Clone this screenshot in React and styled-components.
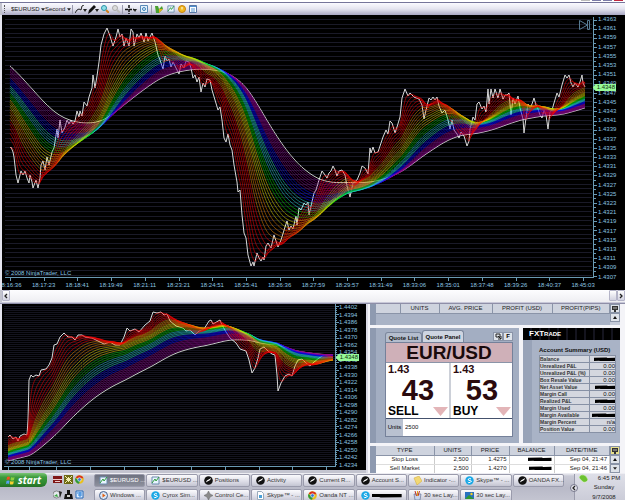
import React from 'react';
import styled, { createGlobalStyle } from 'styled-components';

const GlobalStyle = createGlobalStyle`
    * { box-sizing: border-box; }
    body {
        margin: 0;
        background: #c3c4cf;
        font-family: "Liberation Sans", Arial, sans-serif;
        font-size: 6px;
    }
    button, select, input { font: inherit; margin: 0; padding: 0; border: none; }
    h1, h2, p { margin: 0; }
`;

/* ---------- chart data ---------- */

const mainPrice = [
    [10,148],[11,147],[13,152],[14,157],[16,175],[18,183],[21,171],[23,175],[25,171],[27,178],[29,183],[30,175],
    [32,182],[33,188],[36,180],[38,188],[40,178],[41,165],[43,161],[45,170],[47,157],[49,165],[52,152],[54,148],
    [57,129],[58,138],[60,120],[62,133],[65,127],[67,120],[69,124],[71,120],[73,124],[75,121],[77,111],[79,117],
    [80,111],[82,116],[84,102],[87,106],[89,97],[92,88],[93,75],[95,88],[97,76],[99,62],[101,45],[104,34],
    [107,28],[110,36],[113,46],[116,37],[118,29],[120,37],[122,34],[124,46],[126,38],[129,46],[131,29],[133,32],
    [134,46],[137,34],[139,38],[141,33],[144,42],[146,33],[148,41],[152,33],[155,42],[158,55],[160,60],[163,69],
    [165,56],[167,61],[169,59],[171,67],[173,62],[176,68],[179,74],[181,64],[184,68],[186,61],[189,62],[191,68],
    [193,78],[195,75],[197,82],[199,77],[201,92],[203,83],[205,87],[207,79],[210,80],[212,90],[215,100],[218,110],
    [220,107],[222,120],[224,138],[226,142],[228,134],[230,145],[232,150],[234,165],[237,182],[238,192],[240,190],
    [242,215],[244,233],[246,238],[248,255],[251,266],[253,262],[254,266],[257,253],[259,258],[261,261],[263,257],
    [264,260],[266,246],[268,243],[271,248],[274,235],[278,247],[281,240],[285,227],[287,221],[289,230],[291,226],
    [293,229],[296,216],[297,225],[299,208],[301,210],[304,203],[306,205],[308,202],[309,215],[311,206],[314,193],
    [316,190],[319,180],[322,171],[325,175],[327,178],[329,173],[331,171],[333,166],[335,170],[337,176],[339,171],
    [342,170],[345,175],[347,186],[350,197],[353,183],[357,180],[360,173],[362,166],[365,168],[368,174],[370,148],
    [371,153],[373,147],[375,153],[378,152],[381,143],[383,137],[386,130],[388,134],[390,121],[392,123],[395,133],
    [397,127],[400,117],[402,98],[405,89],[408,96],[410,93],[412,95],[414,97],[416,98],[419,99],[422,105],[424,119],
    [426,110],[429,98],[431,100],[433,97],[435,100],[437,97],[439,106],[442,113],[445,110],[448,120],[450,129],
    [452,120],[454,130],[457,134],[459,138],[461,132],[464,136],[467,146],[469,141],[470,129],[473,117],[475,120],
    [477,104],[479,102],[482,109],[484,106],[486,112],[488,89],[489,104],[491,89],[493,98],[495,89],[498,98],
    [500,89],[503,99],[505,95],[507,95],[509,93],[511,115],[513,98],[515,104],[518,96],[520,108],[523,119],
    [524,133],[526,118],[528,104],[530,108],[532,104],[534,98],[536,105],[538,109],[540,115],[542,118],[544,110],
    [546,115],[548,129],[550,112],[552,110],[554,103],[557,93],[559,97],[562,85],[565,75],[567,78],[569,75],
    [571,83],[573,87],[575,83],[578,87],[580,82],[582,75],[583,83],[585,87],
];

const lowerPrice = [
    [8,437],[10,435],[13,439],[16,437],[18,441],[20,436],[24,434],[27,435],[28,420],[29,380],[31,375],[33,377],
    [36,375],[39,376],[41,370],[46,369],[49,365],[52,358],[54,345],[57,344],[60,337],[64,333],[68,337],[72,337],
    [75,340],[78,335],[82,335],[85,337],[92,338],[98,341],[104,344],[110,342],[115,345],[120,345],[124,337],
    [127,328],[130,331],[135,329],[139,332],[145,325],[150,321],[153,312],[157,313],[161,312],[164,315],[167,314],
    [170,321],[176,326],[183,328],[186,331],[190,330],[195,335],[199,331],[204,329],[209,321],[211,320],[213,324],
    [220,320],[222,325],[226,332],[230,338],[236,343],[240,349],[246,351],[249,360],[252,373],[255,368],[258,358],
    [260,349],[264,347],[268,351],[272,354],[275,355],[277,375],[278,391],[281,383],[285,376],[289,374],[292,376],
    [295,366],[298,360],[302,359],[306,363],[310,366],[314,362],[319,358],[324,355],[329,356],[333,357],
];

// fast to slow
const ribbonColors = [
    ...Array(6).fill('#f80000'),
    ...Array(4).fill('#e88400'),
    ...Array(4).fill('#e0d800'),
    ...Array(3).fill('#00d800'),
    ...Array(4).fill('#20d0d0'),
    ...Array(4).fill('#0808ff'),
    ...Array(7).fill('#8c008c'),
    '#e8e8e8',
];

const priceAt = (points, x) => {
    const i = points.findIndex((p) => p[0] >= x);
    if (i <= 0) return points[0][1];
    const [x0, y0] = points[i - 1];
    const [x1, y1] = points[i];
    return y0 + ((y1 - y0) * (x - x0)) / (x1 - x0);
};

// exponential average, smoothed a second time with a shorter period
const average = (points, start, period, lag) => {
    const [firstX, firstY] = points[0];
    const last = points[points.length - 1][0];
    let ema = start + (firstY - start) * lag * 0.7;
    let line = start;
    const out = [];
    for (let x = firstX; x <= last; x++) {
        ema += (priceAt(points, x) - ema) / period;
        line += (ema - line) / (1 + period * lag);
        out.push(`${x},${line.toFixed(1)}`);
    }
    return out.join(' ');
};

const Ribbon = ({ points, slowStart, slowest, lag }) => {
    const n = ribbonColors.length - 1;
    const first = points[0][1];
    return (
        <g fill="none">
            <polyline points={points.join(' ')} stroke="#d8d8d8" />
            {ribbonColors.map((color, i) => {
                const t = i / n;
                const start = first + (slowStart - first) * Math.pow(t, 0.58);
                return (
                    <polyline
                        key={i}
                        points={average(points, start, 3 + (slowest - 3) * t, lag)}
                        stroke={color}
                        strokeOpacity={i === n ? 0.85 : 0.52}
                    />
                );
            }).reverse()}
        </g>
    );
};

const range = (n) => Array.from({ length: n }, (_, i) => i);

const mainPrices = range(29).map((i) => (1.4363 - i * 0.0002).toFixed(4));
const lowerPrices = range(22).map((i) => (1.4402 - i * 0.0008).toFixed(4));
const times = [
    '18:16:36', '18:17:23', '18:18:41', '18:19:49', '18:21:11', '18:23:21', '18:24:51', '18:25:41', '18:26:36',
    '18:27:59', '18:29:57', '18:31:49', '18:33:06', '18:35:01', '18:37:48', '18:39:26', '18:40:37', '18:45:03',
];

/* ---------- chart window ---------- */

const Page = styled.div`
    display: flex;
    flex-direction: column;
    min-height: 100vh;
    overflow: hidden;
`;
const TitleEdge = styled.div`
    height: 3px;
    background: #fff;
    border-bottom: 1px solid #75759a;
    display: flex;
    justify-content: flex-end;
    gap: 2px;
    padding-right: 2px;
`;
const TitleButton = styled.button`
    width: 9px;
    height: 1px;
    background: ${(p) => p.$color};
`;
const Toolbar = styled.div`
    height: 12px;
    margin-left: 2px;
    padding-left: 2px;
    display: flex;
    align-items: center;
    background: linear-gradient(#fafaff, #e4e4ef 50%, #a9a8c4);
`;
const Grip = styled.span`
    width: 1px;
    height: 8px;
    border-left: 1px dotted #555;
    margin-right: 6px;
`;
const Divider = styled.span`
    width: 1px;
    height: 9px;
    background: #9a9aae;
    margin: 0 1px;
`;
const Picker = styled.select`
    appearance: none;
    width: ${(p) => p.$width}px;
    height: 10px;
    color: #222;
    background: transparent;
`;
const ToolButton = styled.button`
    display: flex;
    align-items: center;
    justify-content: center;
    width: ${(p) => p.$width || 12}px;
    height: 10px;
    background: transparent;
`;
const ChartFrame = styled.div`
    display: flex;
    background: #000;
    border-left: 2px solid #e4e4ee;
    height: ${(p) => p.$height}px;
    position: relative;
    overflow: hidden;
    flex: ${(p) => p.$grow || 'none'};
    min-width: 0;
`;
const PlotColumn = styled.div`
    flex: 1;
    min-width: 0;
    overflow: hidden;
`;
const Plot = styled.svg`
    display: block;
    width: 100%;
    height: ${(p) => p.$height}px;
`;
const PriceScale = styled.div`
    width: 27px;
    height: ${(p) => p.$height}px;
    display: flex;
    flex-direction: column;
    justify-content: space-between;
    color: #8cc4e0;
    line-height: ${(p) => p.$line}px;
`;
const TimeScale = styled.div`
    display: grid;
    grid-template-columns: repeat(18, 1fr);
    margin: 0 -2px 0 -9px;
    color: #8cc4e0;
    text-align: center;
    line-height: 8px;
`;
const PriceTag = styled.span`
    position: absolute;
    right: ${(p) => p.$right}px;
    top: ${(p) => p.$top}px;
    padding: 0 1px 0 4px;
    line-height: 7px;
    color: #103010;
    background: #98fb98;
    clip-path: polygon(0 50%, 3px 0, 100% 0, 100% 100%, 3px 100%);
`;
const Copyright = styled.p`
    position: absolute;
    left: 3px;
    bottom: ${(p) => p.$bottom}px;
    line-height: 8px;
    color: #8cc4e0;
`;
const ScrollTrack = styled.div`
    display: flex;
    justify-content: space-between;
    height: 12px;
    margin-left: 2px;
    background: linear-gradient(#fdfdff, #eeeef2);
`;
const ScrollEnd = styled.div`
    display: flex;
`;
const ScrollButton = styled.button`
    width: 8px;
    height: 11px;
    border: 1px solid #b4b4c8;
    border-radius: 1px;
    background: linear-gradient(#fff, #d2d2e0);
    display: flex;
    align-items: center;
    justify-content: center;
`;
const WindowEdge = styled.div`
    height: 2px;
    background: #8f8fa8;
    border-top: 1px solid #c8c8d8;
`;

const Caret = () => (
    <svg width="4" height="3" viewBox="0 0 5 3"><path d="M0 0h5L2.5 3z" fill="#222" /></svg>
);

const Arrow = ({ d }) => (
    <svg width="6" height="6" viewBox="0 0 6 6"><path d={d} fill="none" stroke="#222" strokeWidth="1.3" /></svg>
);

const MainChart = () => (
    <ChartFrame $height={275}>
        <PlotColumn>
            <Plot $height={266} viewBox="2 15 596 266" preserveAspectRatio="none">
                {range(57).map((i) => (
                    <rect key={i} x="5" y={Math.round(19 + i * 4.57)} width="587" height="1" fill="#1a1a28" />
                ))}
                <Ribbon points={mainPrice} slowStart={65} slowest={64} lag={0.28} />
                <g fill="#6a9ab4">
                    <rect x="593" y="17" width="1" height="261" />
                    <rect x="5" y="277" width="589" height="1" />
                    {range(57).map((i) => (
                        <rect key={i} x="594" y={Math.round(20 + i * 4.57)} width={i % 2 ? 2 : 3} height="1" />
                    ))}
                    {range(18).map((i) => (
                        <rect key={i} x={Math.round(10 + i * 33.7)} y="278" width="1" height="3" />
                    ))}
                </g>
                <g fill="none" stroke="#587c94">
                    <path d="M579.500 20.500v9l8-4.500zM587.500 20.500h2v9h-2z" />
                </g>
            </Plot>
            <TimeScale>
                {times.map((t) => <span key={t}>{t}</span>)}
            </TimeScale>
        </PlotColumn>
        <PriceScale $height={266} $line={8}>
            {mainPrices.map((p) => <span key={p}>{p}</span>)}
        </PriceScale>
        <PriceTag $right={9} $top={69}>1.4348</PriceTag>
        <Copyright $bottom={13}>© 2008 NinjaTrader, LLC</Copyright>
    </ChartFrame>
);

const LowerChart = () => (
    <ChartFrame $height={166} $grow={1}>
        <PlotColumn>
            <Plot $height={166} viewBox="2 304 337 166" preserveAspectRatio="none">
                {range(80).map((i) => (
                    <rect key={i} x="4" y={306 + i * 2} width="331" height="1" fill="#14141f" />
                ))}
                <Ribbon points={lowerPrice} slowStart={461} slowest={80} lag={0.08} />
                <g fill="#6a9ab4">
                    <rect x="335" y="304" width="1" height="163" />
                    <rect x="4" y="466" width="332" height="1" />
                    {range(80).map((i) => (
                        <rect key={i} x="336" y={306 + i * 2} width={i % 4 ? 1 : 3} height="1" />
                    ))}
                    {[8, 29, 56, 90, 124, 157, 191, 225, 259, 292, 326].map((x) => (
                        <rect key={x} x={x} y="467" width="1" height="3" />
                    ))}
                </g>
            </Plot>
        </PlotColumn>
        <PriceScale $height={165} $line={7}>
            {lowerPrices.map((p) => <span key={p}>{p}</span>)}
        </PriceScale>
        <PriceTag $right={7} $top={50}>1.4348</PriceTag>
        <Copyright $bottom={4}>© 2008 NinjaTrader, LLC</Copyright>
    </ChartFrame>
);

/* ---------- trading side ---------- */

const Bottom = styled.div`
    display: flex;
`;
const Side = styled.div`
    width: 259px;
    display: flex;
    flex-direction: column;
    gap: 3px;
    padding: 0 5px 0 2px;
    border-left: 2px solid #dcdce6;
    background: #f4f4f8;
`;
const Strip = styled.div`
    display: flex;
    height: ${(p) => p.$height}px;
    padding-left: 6px;
    background: #8e9ab0;
    overflow: hidden;
`;
const List = styled.table`
    flex: 1;
    table-layout: fixed;
    border-collapse: collapse;
    background: #a9b3c6;
    color: #222;
    line-height: 7px;
    th {
        height: 9px;
        padding: 0;
        font-weight: normal;
        background: #ced3de;
        border-right: 1px solid #8a94a8;
        border-bottom: 1px solid #8a94a8;
    }
    td {
        height: 9px;
        padding: 0 2px;
        text-align: right;
        background: #fff;
        border-right: 1px solid #ccc;
        border-bottom: 1px solid #ddd;
    }
    td:first-child { text-align: center; }
`;
const ListTools = styled.div`
    width: 10px;
    display: flex;
    flex-direction: column;
    background: #c4cad8;
`;
const SmallButton = styled.button`
    width: 10px;
    height: 9px;
    flex: none;
    display: flex;
    align-items: center;
    justify-content: center;
    border: 1px solid #8a94a8;
    background: ${(p) => p.$color || '#dfe3ea'};
`;
const Middle = styled.div`
    display: flex;
    gap: 4px;
    height: 115px;
`;
const QuoteArea = styled.div`
    flex: 1;
    padding: 2px 6px 4px 9px;
    background: #a3aec2;
    border-left: 6px solid #8e9ab0;
`;
const TabRow = styled.div`
    display: flex;
    align-items: flex-end;
    height: 12px;
`;
const Tab = styled.button`
    width: ${(p) => (p.$active ? 42 : 37)}px;
    height: ${(p) => (p.$active ? 12 : 10)}px;
    border: 1px solid #7b879c;
    border-bottom: none;
    border-radius: 3px 3px 0 0;
    font-weight: bold;
    white-space: nowrap;
    color: #111;
    background: ${(p) => (p.$active ? '#ced5e1' : '#b4bdcd')};
`;
const TabTools = styled.div`
    display: flex;
    margin-left: auto;
    align-self: center;
    font-weight: bold;
`;
const Ticket = styled.div`
    border: 1px solid #75819a;
    background: #fff;
`;
const Pair = styled.h1`
    font-size: 19px;
    line-height: 19px;
    font-weight: bold;
    text-align: center;
    color: #1a0a0c;
    background: #cfb0b8;
    border-bottom: 1px solid #8a94a8;
`;
const Sides = styled.div`
    display: grid;
    grid-template-columns: 1fr 1fr;
`;
const Deal = styled.button`
    display: flex;
    flex-direction: column;
    height: 55px;
    padding: 0 1px 0 2px;
    background: #fff;
    color: #2a0a0e;
    & + & { border-left: 2px solid #ccd0d8; }
`;
const Handle = styled.span`
    align-self: flex-start;
    font-size: 11px;
    line-height: 13px;
    font-weight: bold;
`;
const Pips = styled.span`
    align-self: center;
    font-size: 29px;
    line-height: 29px;
    font-weight: bold;
`;
const Action = styled.span`
    align-self: stretch;
    display: flex;
    align-items: center;
    justify-content: space-between;
    font-size: 12px;
    line-height: 13px;
    font-weight: bold;
    color: #000;
`;
const UnitsRow = styled.label`
    display: flex;
    height: 18px;
    border-top: 1px solid #44516c;
    line-height: 17px;
    background: #b9c1d0;
    span { width: 17px; text-align: center; }
    input { flex: 1; min-width: 0; padding-left: 2px; background: #fff; color: #111; }
`;
const Account = styled.div`
    width: 97px;
    background: #a9b3c6;
`;
const Brand = styled.div`
    height: 12px;
    padding-left: 6px;
    font-size: 8px;
    line-height: 12px;
    font-weight: bold;
    font-variant: small-caps;
    color: #fff;
    background: #000 repeating-linear-gradient(90deg, transparent 0 7px, #14141e 7px 9px);
`;
const AccountBody = styled.div`
    height: 103px;
    padding: 5px 0 0 7px;
    border-left: 9px solid #98a3b8;
`;
const AccountTitle = styled.h2`
    font-size: 6px;
    line-height: 10px;
    white-space: nowrap;
    color: #111;
`;
const AccountTable = styled.table`
    width: 77px;
    table-layout: fixed;
    border-collapse: collapse;
    font-size: 5px;
    line-height: 6px;
    color: #111;
    th, td {
        height: 7px;
        padding: 0;
        border: 1px solid #8791a5;
        background: #d4d7df;
        white-space: nowrap;
    }
    th { width: 50px; text-align: left; font-weight: bold; color: #333; }
    td { font-size: 6px; text-align: right; }
`;
const Mark = styled.span`
    display: inline-block;
    vertical-align: middle;
    width: ${(p) => p.$width}px;
    height: 4px;
    background: #000;
    clip-path: polygon(0 10%, 60% 0, 64% 15%, 100% 10%, 100% 95%, 30% 100%, 25% 85%, 0 90%);
`;

const accountRows = [
    ['Balance', 21], ['Unrealized P&L', '0.00'], ['Unrealized P&L (%)', '0.00'], ['Box Resale Value', '0.00'],
    ['Net Asset Value', 20], ['Margin Call', '0.00'], ['Realized P&L', 20], ['Margin Used', '0.00'],
    ['Margin Available', 23], ['Margin Percent', 'n/a'], ['Position Value', '0.00'],
];

const DownMark = () => (
    <svg width="15" height="9" viewBox="0 0 15 9"><path d="M0 0h15L7.500 9z" fill="#e3b5b8" /></svg>
);
const Monitor = () => (
    <svg width="6" height="6" viewBox="0 0 6 6"><path d="M0 0h6v4H4v2H2V4H0z" fill="#333" /><path d="M1 1h4v2H1z" fill="#777" /></svg>
);
const UpArrow = () => (
    <svg width="4" height="3" viewBox="0 0 4 3"><path d="M0 3h4L2 0z" fill="#111" /></svg>
);
const Quote = ({ name, pips }) => (
    <Deal>
        <Handle>1.43</Handle>
        <Pips>{pips}</Pips>
        <Action>{name}<DownMark /></Action>
    </Deal>
);

const Trading = () => (
    <Side>
        <Strip $height={21}>
            <List>
                <thead>
                    <tr>
                        <th width="24" /><th width="39">UNITS</th><th width="53">AVG. PRICE</th>
                        <th width="60">PROFIT (USD)</th><th>PROFIT(PIPS)</th>
                    </tr>
                </thead>
                <tbody><tr /></tbody>
            </List>
            <ListTools>
                <SmallButton aria-label="Columns"><Monitor /></SmallButton>
                <SmallButton aria-label="Scroll up"><UpArrow /></SmallButton>
            </ListTools>
        </Strip>
        <Middle>
            <QuoteArea>
                <TabRow>
                    <Tab>Quote List</Tab>
                    <Tab $active>Quote Panel</Tab>
                    <TabTools>
                        <SmallButton aria-label="Detach">
                            <svg width="7" height="7" viewBox="0 0 7 7">
                                <path d="M1 1h4v3H1zM3 3l3 3M6 3v3H3" fill="none" stroke="#222" />
                            </svg>
                        </SmallButton>
                        <SmallButton>F</SmallButton>
                    </TabTools>
                </TabRow>
                <Ticket>
                    <Pair>EUR/USD</Pair>
                    <Sides>
                        <Quote name="SELL" pips="43" />
                        <Quote name="BUY" pips="53" />
                    </Sides>
                    <UnitsRow><span>Units</span><input type="text" defaultValue="2500" /></UnitsRow>
                </Ticket>
            </QuoteArea>
            <Account>
                <Brand>FXTrade</Brand>
                <AccountBody>
                    <AccountTitle>Account Summary (USD)</AccountTitle>
                    <AccountTable>
                        <tbody>
                            {accountRows.map(([name, value]) => (
                                <tr key={name}>
                                    <th scope="row">{name}</th>
                                    <td>{typeof value === 'number' ? <Mark $width={value} /> : value}</td>
                                </tr>
                            ))}
                        </tbody>
                    </AccountTable>
                </AccountBody>
            </Account>
        </Middle>
        <Strip $height={27}>
            <List>
                <thead>
                    <tr>
                        <th width="58">TYPE</th><th width="37">UNITS</th><th width="38">PRICE</th>
                        <th width="45">BALANCE</th><th>DATE/TIME</th>
                    </tr>
                </thead>
                <tbody>
                    <tr><td>Stop Loss</td><td>2,500</td><td>1.4275</td><td><Mark $width={24} /></td><td>Sep 04, 21:47</td></tr>
                    <tr><td>Sell Market</td><td>2,500</td><td>1.4270</td><td><Mark $width={23} /></td><td>Sep 04, 21:46</td></tr>
                </tbody>
            </List>
            <ListTools>
                <SmallButton $color="#e8e08a" aria-label="Columns"><Monitor /></SmallButton>
                <SmallButton aria-label="Scroll up"><UpArrow /></SmallButton>
                <SmallButton aria-label="Scroll down"><Caret /></SmallButton>
            </ListTools>
        </Strip>
    </Side>
);

/* ---------- task bar ---------- */

const Taskbar = styled.div`
    display: flex;
    flex: 1;
    height: 30px;
    background: linear-gradient(#f4f4f8, #c9cad6 10%, #b9bac8 50%, #c6c7d3);
`;
const StartButton = styled.button`
    display: flex;
    align-items: center;
    justify-content: center;
    gap: 3px;
    width: 47px;
    height: 14px;
    border-radius: 0 4px 6px 0;
    font-family: "Open Sans", sans-serif;
    font-size: 10px;
    font-style: italic;
    font-weight: bold;
    line-height: 10px;
    color: #fff;
    background: linear-gradient(#7cc576, #3c9a3c 30%, #2f8a30 70%, #256f27);
`;
const QuickLaunch = styled.div`
    display: grid;
    grid-template-columns: repeat(3, 9px);
    grid-template-rows: 13px 13px;
    gap: 2px;
    align-items: center;
    padding-left: 6px;
    width: 47px;
`;
const Tasks = styled.div`
    flex: 1;
    min-width: 0;
    display: grid;
    grid-template-columns: repeat(9, 1fr);
    grid-template-rows: 13px 13px;
    gap: 2px 1px;
    padding: 1px 0;
`;
const Task = styled.button`
    display: flex;
    align-items: center;
    gap: 2px;
    min-width: 0;
    padding: 0 0 0 4px;
    border: 1px solid #9a9bac;
    border-radius: 2px;
    white-space: nowrap;
    line-height: 9px;
    color: ${(p) => (p.$active ? '#fff' : '#333')};
    background: ${(p) => (p.$active ? 'linear-gradient(#6e7280, #8d909d)' : 'linear-gradient(#fbfbfd, #dcdce6 60%, #c4c5d2)')};
    svg { flex: none; }
`;
const Tray = styled.div`
    display: flex;
    align-items: center;
    width: 61px;
    padding-left: 6px;
`;
const TrayPanel = styled.div`
    flex: 1;
    height: 29px;
    display: grid;
    grid-template-columns: 14px 1fr;
    padding-left: 4px;
    text-align: center;
    line-height: 9px;
    color: #222;
    border-left: 1px solid #9a9bac;
    background: linear-gradient(#dedfe8, #c9cad6);
`;
const ClockLine = styled.span`
    grid-column: ${(p) => (p.$wide ? '1 / 3' : 'auto')};
    padding-left: ${(p) => (p.$wide ? 4 : 0)}px;
`;
const TrayToggle = styled.button`
    width: 8px;
    height: 8px;
    margin-right: -4px;
    z-index: 1;
    display: flex;
    align-items: center;
    justify-content: center;
    border: 1px solid #77788c;
    border-radius: 4px;
    background: #e4e4ec;
`;

const glyphs = {
    chart: <><path d="M1 1h7v7H1z" fill="#e8f4ff" stroke="#6c8cae" /><path d="M1 7l3-4 1 2 3-4" fill="none" stroke="#2f9e3c" /></>,
    oanda: <><circle cx="4.500" cy="4.500" r="4.300" fill="#111" /><path d="M2 6.500C2.500 3.500 4 4.500 7 2 6.500 5 4 4.500 2 6.500z" fill="#fff" /></>,
    player: <><circle cx="4.500" cy="4.500" r="4" fill="#dce6f4" stroke="#44608c" /><path d="M3.500 2.500l3 2-3 2z" fill="#e06010" /></>,
    skype: <><circle cx="4.500" cy="4.500" r="4.200" fill="#19a8e6" /><path d="M6 3Q4.500 1.800 3.400 3T5 4.600 5.500 6.200 2.800 6" fill="none" stroke="#fff" /></>,
    cog: <path d="M4.500 0L6 3l3 1.500L6 6 4.500 9 3 6 0 4.500 3 3z" fill="#8a8a8a" stroke="#666" strokeWidth=".5" />,
    page: <><path d="M1.500.5h4l2 2v6h-6z" fill="#fff" stroke="#9ab" /><path d="M3 4h3v3H3z" fill="#4aa0d8" /></>,
    note: <path d="M1 2l5-2 3 5-5 4z" fill="#f2d874" stroke="#d0a830" strokeWidth=".5" />,
    chrome: <><circle cx="4.500" cy="4.500" r="4.300" fill="#e8c020" /><path d="M.6 3a4.300 4.300 0 0 1 8 .2H4.500z" fill="#d83020" /><path d="M.4 3a4.300 4.300 0 0 0 3.600 5.800L5 6z" fill="#2c9a3c" /><circle cx="4.500" cy="4.500" r="1.800" fill="#3878d8" stroke="#fff" strokeWidth=".6" /></>,
    paint: <><path d="M1 3h7L7 9H2z" fill="#c8d4ec" stroke="#55648c" strokeWidth=".6" /><path d="M2 0l1.500 5M6.500 0L5 5" stroke="#c03020" /><path d="M4.500 0v5" stroke="#e0a020" /></>,
    photo: <><path d="M0 1h9v7H0z" fill="#2870c0" /><path d="M0 8l4-4 5 4z" fill="#2f9a30" /><circle cx="6.500" cy="3" r="1.200" fill="#f4d020" /></>,
    skypeLeaf: <path d="M0 3Q2 0 5 1t4 5Q6 10 3 7T0 3z" fill="#6cc230" stroke="#e8f8d8" strokeWidth=".5" />,
    red: <><path d="M0 1h9v7H0z" fill="#801818" /><path d="M0 4h9v1H0zM2 6h5v1H2z" fill="#eecccc" /></>,
    cross: <><path d="M0 0h9v9H0z" fill="#6e6a14" /><path d="M1 1l7 7M8 1L1 8M4.500 2v5M2 4.500h5" stroke="#f0ecb0" /></>,
    disk: <><circle cx="3.500" cy="4.500" r="3.500" fill="#e4e8ec" stroke="#555" strokeWidth=".6" /><path d="M1 6l3-2 1 3z" fill="#38a840" /><path d="M6 1l3 1-2 6z" fill="#222" /></>,
    stamp: <><path d="M3 0h3v4h2l1 5H0l1-5h2z" fill="#111" /><path d="M3 5h3v2H3z" fill="#ccc" /></>,
    mail: <><path d="M1 1h7v7H1z" fill="#dcecff" stroke="#2468b8" /><path d="M2 3h5M3 5h4M5 2v5" stroke="#2880d8" /></>,
};
const Glyph = ({ name, size = 9 }) => (
    <svg width={size} height={size} viewBox="0 0 9 9" aria-hidden="true">{glyphs[name]}</svg>
);

const tasks = [
    ['chart', '$EURUSD ...'], ['chart', '$EURUSD ...'], ['oanda', 'Positions'], ['oanda', 'Activity'],
    ['oanda', 'Current R...'], ['oanda', 'Account S...'], ['note', 'Indicator -...'], ['skype', 'Skype™ - ...'],
    ['oanda', 'OANDA FX...'], ['player', 'Windows ...'], ['skype', 'Cyrox Sim...'], ['cog', 'Control Ce...'],
    ['page', 'Skype™ - ...'], ['chrome', 'Oanda NT ...'], ['skype', ''], ['paint', '30 sec Lay...'],
    ['photo', '30 sec Lay...'],
];

const App = () => (
    <Page>
        <GlobalStyle />
        <TitleEdge>
            <TitleButton $color="#bbb" aria-label="Link" />
            <TitleButton $color="#7c7ca8" aria-label="Minimize" />
            <TitleButton $color="#7c7ca8" aria-label="Maximize" />
            <TitleButton $color="#c02840" aria-label="Close" />
        </TitleEdge>
        <Toolbar>
            <Grip />
            <Picker $width={29} aria-label="Instrument"><option>$EURUSD</option></Picker>
            <ToolButton $width={5} aria-label="Instruments"><Caret /></ToolButton>
            <Picker $width={21} aria-label="Interval"><option>Second</option></Picker>
            <ToolButton $width={5} aria-label="Intervals"><Caret /></ToolButton>
            <Divider />
            <ToolButton $width={13} aria-label="Chart style">
                <svg width="12" height="9" viewBox="0 0 12 9"><path d="M0 8l2-3 2-1 2 1 1-4 2-1" fill="none" stroke="#222" /><path d="M8 4h4l-2 3z" fill="#222" /></svg>
            </ToolButton>
            <ToolButton aria-label="Draw">
                <svg width="12" height="9" viewBox="0 0 12 9"><path d="M1 9l1-4 5-5 2 2-5 5z" fill="#111" /><path d="M8 4h4l-2 3z" fill="#222" /></svg>
            </ToolButton>
            <ToolButton $width={11} aria-label="Zoom in">
                <svg width="8" height="8" viewBox="0 0 8 8"><path d="M5 5l3 3" stroke="#d08020" strokeWidth="2" /><circle cx="3" cy="3" r="2.500" fill="#8fe0e8" stroke="#2a90a8" /></svg>
            </ToolButton>
            <ToolButton $width={11} aria-label="Zoom out">
                <svg width="8" height="8" viewBox="0 0 8 8"><path d="M5 5l3 3" stroke="#bbb" strokeWidth="2" /><circle cx="3" cy="3" r="2.500" fill="#ddd" stroke="#aaa" /></svg>
            </ToolButton>
            <Divider />
            <ToolButton $width={13} aria-label="Crosshair">
                <svg width="12" height="9" viewBox="0 0 12 9"><path d="M4 0v9M0 4.500h9" stroke="#111" strokeDasharray="3 1" strokeWidth="1.500" /><path d="M8 4h4l-2 3z" fill="#222" /></svg>
            </ToolButton>
            <ToolButton $width={13} aria-label="Zoom frame">
                <svg width="8" height="8" viewBox="0 0 8 8"><path d="M.5.5h7v7h-7z" fill="#e4f0fa" stroke="#5a8ab8" /><circle cx="4" cy="4" r="1.500" fill="none" stroke="#3a80b8" /></svg>
            </ToolButton>
            <Divider />
            <ToolButton aria-label="Orders">
                <svg width="8" height="8" viewBox="0 0 8 8"><path d="M0 1h3l1 3 3-3 1 3-4 4H1z" fill="#4aa030" /><path d="M4 4h4L4 8z" fill="#e0b020" /></svg>
            </ToolButton>
            <ToolButton $width={11} aria-label="Indicators"><Glyph name="chart" size={8} /></ToolButton>
            <ToolButton $width={11} aria-label="Strategies">
                <svg width="8" height="8" viewBox="0 0 8 8"><circle cx="4" cy="4" r="3.500" fill="#f0b820" stroke="#c88010" /><path d="M4 2v2.500" stroke="#fff" /></svg>
            </ToolButton>
            <ToolButton aria-label="Properties">
                <svg width="8" height="8" viewBox="0 0 8 8"><path d="M.5.5h7v7h-7z" fill="#fff" stroke="#5878a8" /><path d="M1 1.500h6M2 4h4M2 6h4" stroke="#5090d0" /></svg>
            </ToolButton>
        </Toolbar>
        <MainChart />
        <ScrollTrack>
            <ScrollButton aria-label="Scroll left"><Arrow d="M4 1L2 3l2 2" /></ScrollButton>
            <ScrollEnd>
                <ScrollButton aria-label="Thumb" />
                <ScrollButton aria-label="Scroll right"><Arrow d="M2 1l2 2-2 2" /></ScrollButton>
            </ScrollEnd>
        </ScrollTrack>
        <WindowEdge />
        <Bottom>
            <LowerChart />
            <Trading />
        </Bottom>
        <Taskbar>
            <StartButton>
                <svg width="9" height="9" viewBox="0 0 9 9">
                    <path d="M1 1q2-1 3 0L3.500 4q-1-1-3 0z" fill="#f05020" /><path d="M5 1q2 1 3.500 0L8 4q-2 1-3.500 0z" fill="#8cd040" />
                    <path d="M.5 5q2-1 3 0L3 8q-1-1-3 0z" fill="#58a0f0" /><path d="M4.300 5q2 1 3.500 0L7.300 8q-2 1-3.500 0z" fill="#f8d030" />
                </svg>
                start
            </StartButton>
            <QuickLaunch>
                {['red', 'cross', 'chrome', 'disk', 'stamp', 'mail'].map((g) => <Glyph key={g} name={g} />)}
            </QuickLaunch>
            <Tasks>
                {tasks.map(([icon, text], i) => (
                    <Task key={i} $active={i === 0}>
                        <Glyph name={icon} />{text || <Mark $width={30} />}
                    </Task>
                ))}
            </Tasks>
            <Tray>
                <TrayToggle aria-label="Show hidden icons"><Arrow d="M4 1L2 3l2 2" /></TrayToggle>
                <TrayPanel>
                    <Glyph name="skypeLeaf" />
                    <ClockLine>6:45 PM</ClockLine>
                    <ClockLine $wide>Sunday</ClockLine>
                    <ClockLine $wide>9/7/2008</ClockLine>
                </TrayPanel>
            </Tray>
        </Taskbar>
    </Page>
);

export default App;
